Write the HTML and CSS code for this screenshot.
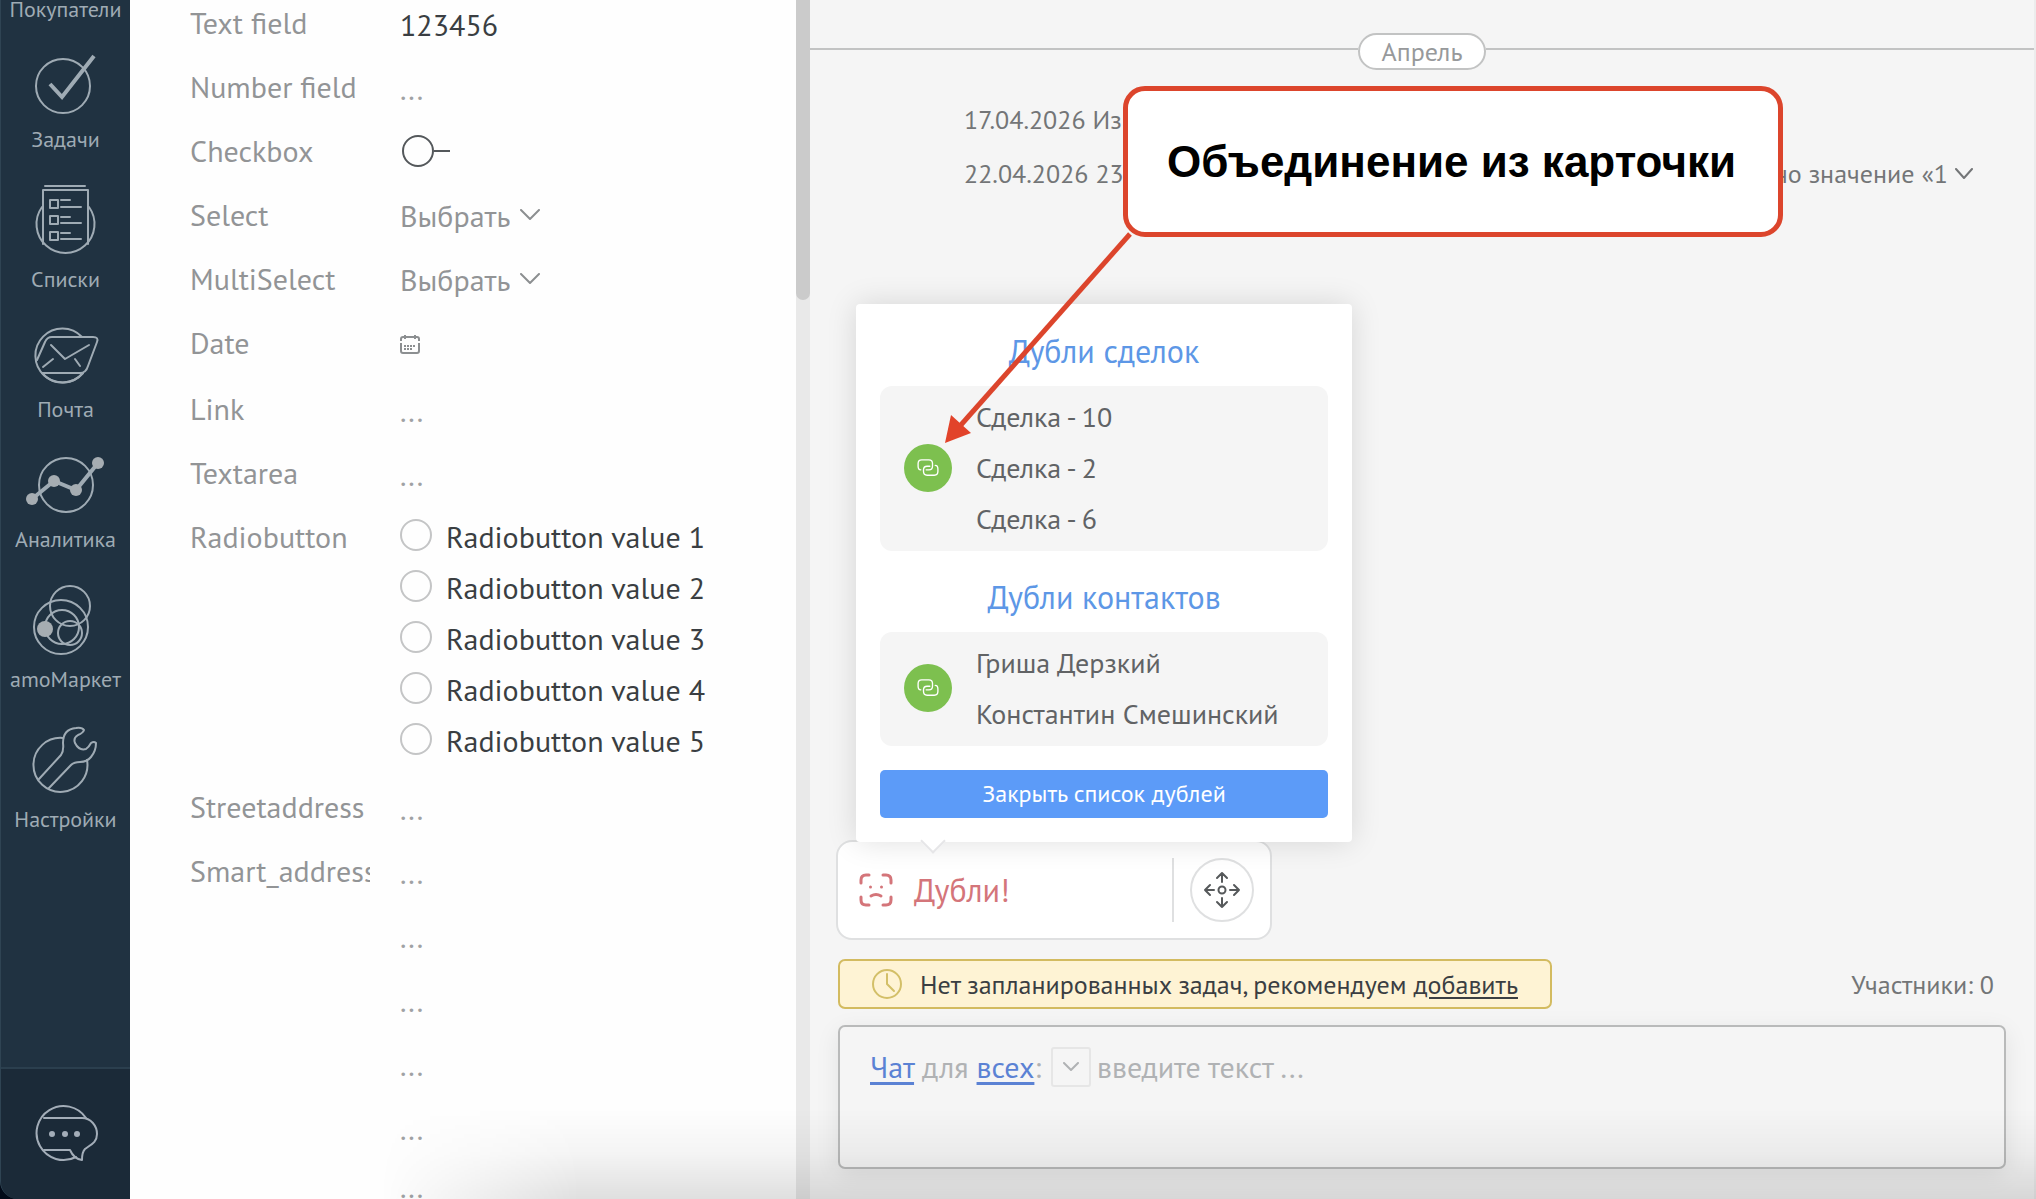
FILE: index.html
```html
<!DOCTYPE html>
<html lang="ru">
<head>
<meta charset="utf-8">
<meta name="viewport" content="width=device-width, initial-scale=1">
<title>Сделка</title>
<link rel="stylesheet" href="styles.css">
</head>
<body>
<div class="app">
  <div class="sidebar-frame">
    <nav class="sidebar">
      <div class="menu">
        <a class="menu-item" href="#"><span>Покупатели</span></a>
        <a class="menu-item" href="#">
          <svg class="menu-icon" viewBox="0 23 130 106" aria-hidden="true"><circle cx="63" cy="86" r="27"/><path class="thick" d="M50 84l12 13 32-41"/></svg>
          <span>Задачи</span>
        </a>
        <a class="menu-item menu-item-tall" href="#">
          <svg class="menu-icon" viewBox="0 153 130 116" aria-hidden="true"><path d="M45 186h40M43 244V190h45v54M42 207a29 29 0 1 0 47 0"/><path d="M50 200h8v8h-8zM50 216h8v8h-8zM50 232h8v8h-8zM61 200h9M61 207h20M61 217h9M61 223h20M61 233h9M61 239h20"/></svg>
          <span>Списки</span>
        </a>
        <a class="menu-item" href="#">
          <svg class="menu-icon" viewBox="0 293 130 106" aria-hidden="true"><path d="M82 337A27 27 0 1 0 83 373"/><path d="M37 360l8-18q2-5 7-5h41q6 0 4 5l-9 24q-2 7-8 7H42M51 345l14 14 24-14M43 367l10-8M75 359l5 7M83 373a27 27 0 0 1-41 0"/></svg>
          <span>Почта</span>
        </a>
        <a class="menu-item" href="#">
          <svg class="menu-icon" viewBox="0 423 130 106" aria-hidden="true"><circle cx="66" cy="485" r="27"/><path class="thick" d="M32 499l22-18 22 9 22-27"/><g class="solid"><circle cx="32" cy="499" r="6"/><circle cx="54" cy="481" r="6"/><circle cx="76" cy="490" r="6"/><circle cx="98" cy="463" r="6"/></g></svg>
          <span>Аналитика</span>
        </a>
        <a class="menu-item menu-item-tall" href="#">
          <svg class="menu-icon" viewBox="0 553 130 116" aria-hidden="true"><circle cx="61" cy="627" r="27"/><circle cx="70" cy="606" r="20"/><circle cx="62" cy="627" r="17"/><circle cx="70" cy="633" r="12"/><circle class="solid" cx="45" cy="629" r="8"/></svg>
          <span>amoМаркет</span>
        </a>
        <a class="menu-item menu-item-tall" href="#">
          <svg class="menu-icon" viewBox="0 693 130 116" aria-hidden="true"><path d="M63 738a27 27 0 1 0 24 22"/><path d="M39 779l22-24q3-4 2-12 0-14 13-15 6-1 8 2-1 3-6 5-5 3-3 8 4 8 11 6 3-2 5-6 3-2 5 0 0 8-5 14-4 5-11 5-6 0-9 3l-22 23"/></svg>
          <span>Настройки</span>
        </a>
      </div>
      <button class="chat-button" type="button" aria-label="Чаты">
        <svg class="chat-icon" viewBox="0 0 64 60" aria-hidden="true"><path d="M52 14A27 27 0 1 0 42 53"/><path d="M10 14h38c9 0 15 8 15 16 0 9-7 11-12 15q-3 3-3 11-8-1-12-10H10"/><g class="solid"><circle cx="18" cy="30" r="3"/><circle cx="31" cy="30" r="3"/><circle cx="43" cy="30" r="3"/></g></svg>
      </button>
    </nav>
  </div>

  <section class="card">
    <form class="fields">
      <div class="field"><label for="f-text">Text field</label><input class="text-value" id="f-text" type="text" value="123456"></div>
      <div class="field"><label for="f-number">Number field</label><input class="text-value" id="f-number" type="text" placeholder="..."></div>
      <div class="field"><label for="f-check">Checkbox</label><input class="switch" id="f-check" type="checkbox"></div>
      <div class="field"><label for="f-select">Select</label><div class="select-wrap"><select id="f-select"><option>Выбрать</option></select><svg class="chevron" viewBox="0 0 20 12" aria-hidden="true"><path d="M1 1l9 9 9-9"/></svg></div></div>
      <div class="field"><label for="f-multi">MultiSelect</label><div class="select-wrap"><select id="f-multi"><option>Выбрать</option></select><svg class="chevron" viewBox="0 0 20 12" aria-hidden="true"><path d="M1 1l9 9 9-9"/></svg></div></div>
      <div class="field"><label for="f-date">Date</label><button class="date-button" id="f-date" type="button" aria-label="Date"><svg viewBox="0 0 20 20" aria-hidden="true"><path d="M1 7V5q0-2 2-2h14q2 0 2 2v2M1 9v8q0 2 2 2h14q2 0 2-2V9M5 1v4M15 1v4"/><path stroke-dasharray="2 1" d="M4 12h12M4 15h9"/></svg></button></div>
      <div class="field"><label for="f-link">Link</label><input class="text-value" id="f-link" type="text" placeholder="..."></div>
      <div class="field"><label for="f-area">Textarea</label><input class="text-value" id="f-area" type="text" placeholder="..."></div>
      <div class="field" role="radiogroup" aria-labelledby="radio-label">
        <span class="field-label" id="radio-label">Radiobutton</span>
        <div class="radios">
          <label class="radio"><input type="radio" name="rb">Radiobutton value 1</label>
          <label class="radio"><input type="radio" name="rb">Radiobutton value 2</label>
          <label class="radio"><input type="radio" name="rb">Radiobutton value 3</label>
          <label class="radio"><input type="radio" name="rb">Radiobutton value 4</label>
          <label class="radio"><input type="radio" name="rb">Radiobutton value 5</label>
        </div>
      </div>
      <div class="field"><label for="f-street">Streetaddress</label><input class="text-value" id="f-street" type="text" placeholder="..."></div>
      <div class="field"><label for="f-smart">Smart_address</label><input class="text-value" id="f-smart" type="text" placeholder="..."></div>
      <div class="field"><input class="text-value" type="text" placeholder="..." aria-label="Город"></div>
      <div class="field"><input class="text-value" type="text" placeholder="..." aria-label="Регион"></div>
      <div class="field"><input class="text-value" type="text" placeholder="..." aria-label="Индекс"></div>
      <div class="field"><input class="text-value" type="text" placeholder="..." aria-label="Страна"></div>
      <div class="field field-short"><input class="text-value" type="text" placeholder="..." aria-label="Дом"></div>
    </form>
    <div class="scroll-track"><div class="scroll-thumb"></div></div>
  </section>

  <main class="feed">
    <div class="month"><span>Апрель</span></div>
    <div class="events">
      <div class="event"><span>17.04.2026 Из</span></div>
      <div class="event"><span>22.04.2026 23</span><button class="event-more" type="button">но значение «1<svg class="event-chevron" viewBox="0 0 18 12" aria-hidden="true"><path d="M1 1l8 9 8-9"/></svg></button></div>
    </div>

    <div class="dock">
      <div class="widget">
        <svg class="face" viewBox="0 0 34 34" aria-hidden="true"><path d="M2 10V7q0-5 5-5h3M24 2h3q5 0 5 5v3M32 24v3q0 5-5 5h-3M10 32H7q-5 0-5-5v-3M12 23q5-3 10 0"/><circle cx="11.500" cy="14" r="1.500"/><circle cx="22.500" cy="14" r="1.500"/></svg>
        <span class="widget-title">Дубли!</span>
        <button class="move" type="button" aria-label="Переместить"><svg viewBox="0 0 36 36" aria-hidden="true"><circle cx="18" cy="18" r="3.500"/><path d="M18 10V1M13 6l5-5 5 5M18 26v9M13 30l5 5 5-5M10 18H1M6 13l-5 5 5 5M26 18h9M30 13l5 5-5 5"/></svg></button>

        <div class="popover">
          <h2>Дубли сделок</h2>
          <div class="group">
            <button class="merge" type="button" aria-label="Объединить сделки"><svg viewBox="0 0 24 20" aria-hidden="true"><path d="M4 12Q1 12 1 8V5q0-4 4-4h8q4 0 4 4v3q0 4-4 4h-3"/><path d="M20 7q3 0 3 4v3q0 4-4 4h-8q-4 0-4-4v-2q0-4 4-4h3"/></svg></button>
            <ul><li>Сделка - 10</li><li>Сделка - 2</li><li>Сделка - 6</li></ul>
          </div>
          <h2>Дубли контактов</h2>
          <div class="group">
            <button class="merge" type="button" aria-label="Объединить контакты"><svg viewBox="0 0 24 20" aria-hidden="true"><path d="M4 12Q1 12 1 8V5q0-4 4-4h8q4 0 4 4v3q0 4-4 4h-3"/><path d="M20 7q3 0 3 4v3q0 4-4 4h-8q-4 0-4-4v-2q0-4 4-4h3"/></svg></button>
            <ul><li>Гриша Дерзкий</li><li>Константин Смешинский</li></ul>
          </div>
          <button class="close-list" type="button">Закрыть список дублей</button>
        </div>
      </div>

      <div class="task-row">
        <div class="task-hint">
          <svg class="clock" viewBox="0 0 30 30" aria-hidden="true"><circle cx="15" cy="15" r="14"/><path d="M15 5v10l7 7"/></svg>
          <span>Нет запланированных задач, рекомендуем <a href="#">добавить</a></span>
        </div>
        <span class="members">Участники: 0</span>
      </div>

      <div class="composer">
        <span class="recipient"><a href="#">Чат</a> для <a href="#">всех</a>:</span>
        <button class="pick" type="button" aria-label="Выбрать получателя"><svg viewBox="0 0 16 10" aria-hidden="true"><path d="M1 1l7 7 7-7"/></svg></button>
        <textarea placeholder="введите текст ..." aria-label="Сообщение"></textarea>
      </div>
    </div>

    <svg class="arrow" viewBox="0 0 200 220" aria-hidden="true"><path class="shaft" d="M190 4L20 196"/><path class="head" d="M5 213l6-28 20 18z"/></svg>
    <div class="callout">Объединение из карточки</div>
  </main>
  <div class="bottom-shade"></div>
</div>
</body>
</html>
```
FILE: styles.css
```css
* { box-sizing: border-box; }

body {
  margin: 0;
  font-family: "PT Sans", "Noto Sans", sans-serif;
  font-size: 30px;
  color: #3a3e42;
  background: #f5f5f5;
}

button, input, select, textarea {
  font: inherit;
  color: inherit;
  margin: 0;
  padding: 0;
  border: 0;
  background: none;
}

svg { display: block; fill: none; stroke-linecap: round; stroke-linejoin: round; }

.app {
  position: relative;
  display: flex;
  height: 100vh;
  overflow: hidden;
}

/* Main menu */
.sidebar-frame { flex: none; width: 130px; background: #020a18; }

.sidebar {
  display: flex;
  flex-direction: column;
  height: 100%;
  overflow: hidden;
  background: #203241;
  border-left: 1px solid #2f4453;
  border-bottom-left-radius: 18px;
}

.menu { flex: 1; min-height: 0; margin-top: -1px; }

.menu-item {
  display: block;
  padding-bottom: 4px;
  color: #9fabb4;
  font-size: 22px;
  line-height: 20px;
  text-align: center;
  text-decoration: none;
}

.menu-icon { width: 130px; height: 106px; margin-left: -1px; stroke: #9fabb4; stroke-width: 2; }
.menu-item-tall .menu-icon { height: 116px; }
.menu-icon .thick { stroke-width: 4; stroke-linecap: butt; stroke-linejoin: miter; }
.solid { fill: #a6adb2; stroke: none; }

.chat-button {
  flex: none;
  display: flex;
  justify-content: center;
  align-items: center;
  height: 132px;
  background: #1b2a38;
  border-top: 2px solid #2b3f4e;
}
.chat-icon { width: 64px; height: 60px; stroke: #a3adb8; stroke-width: 2; }
.chat-icon .solid { fill: #a3adb8; }

/* Deal card */
.card { flex: none; display: flex; width: 680px; background: #fefefe; }

.fields { flex: 1; min-width: 0; margin-top: -9px; overflow: hidden; }

.field {
  display: grid;
  grid-template-columns: 180px 1fr;
  column-gap: 30px;
  align-items: center;
  min-height: 64px;
  padding-left: 60px;
}
.field > :last-child { grid-column: 2; }

.field > label, .field-label {
  align-self: start;
  overflow: hidden;
  color: #929496;
  line-height: 64px;
  white-space: nowrap;
}

.text-value { width: 100%; height: 64px; padding-top: 2px; outline: none; }
.text-value::placeholder { color: #a0a2a4; opacity: 1; }

.field-short { min-height: 52px; }
.field-short .text-value { height: 52px; }

.switch {
  position: relative;
  appearance: none;
  width: 32px;
  height: 32px;
  margin-left: 2px;
  border: 2px solid #54585b;
  border-radius: 50%;
}
.switch::after {
  content: "";
  position: absolute;
  left: 30px;
  top: 13px;
  width: 16px;
  height: 2px;
  background: #54585b;
}

.select-wrap { display: flex; align-items: center; gap: 10px; color: #929496; }
.select-wrap select { appearance: none; field-sizing: content; height: 48px; }
.chevron { width: 20px; height: 12px; stroke: #8c8f91; stroke-width: 2; }

.date-button { justify-self: start; width: 20px; height: 66px; }
.date-button svg { width: 20px; height: 20px; stroke: #8c8f91; stroke-width: 2; stroke-linecap: butt; }

.radios { padding: 6px 0 9px; }
.radio { display: flex; gap: 14px; line-height: 51px; }
.radio input {
  appearance: none;
  width: 32px;
  height: 32px;
  margin-top: 8px;
  border: 2px solid #c4c5c6;
  border-radius: 50%;
}

.scroll-track { flex: none; width: 14px; background: #e9e9e9; }
.scroll-thumb { height: 25%; background: #cbcbcb; border-radius: 0 0 7px 7px; }

/* Event feed */
.feed {
  position: relative;
  flex: 1;
  min-width: 0;
  display: flex;
  flex-direction: column;
  background: #f5f5f5;
  border-right: 2px solid #ececec;
}

.month {
  display: flex;
  align-items: center;
  margin-top: 33px;
  color: #97999b;
  font-size: 26px;
  line-height: 33px;
}
.month::before, .month::after {
  content: "";
  flex: 1;
  height: 2px;
  margin-bottom: 5px;
  background: #c2c3c3;
}
.month span {
  width: 128px;
  background: #fff;
  border: 2px solid #c2c3c3;
  border-radius: 20px;
  text-align: center;
}

.events { padding: 23px 61px 0 154px; color: #737577; font-size: 26px; line-height: 54px; }
.event { display: flex; justify-content: space-between; white-space: nowrap; }
.event-more { display: flex; align-items: center; gap: 7px; }
.event-chevron { width: 18px; height: 12px; stroke: #737577; stroke-width: 2; }

.dock {
  display: flex;
  flex-direction: column;
  margin-top: auto;
  padding: 0 28px 30px 28px;
}

.widget {
  position: relative;
  display: flex;
  align-items: center;
  width: 436px;
  height: 100px;
  margin: 0 0 19px -2px;
  padding: 0 16px 0 21px;
  background: #fff;
  border: 2px solid #dfe0e1;
  border-radius: 16px;
}
.face { width: 34px; height: 34px; stroke: #d4757a; stroke-width: 3; }
.face circle { fill: #d4757a; stroke: none; }
.widget-title {
  flex: 1;
  margin-right: 16px;
  padding-left: 21px;
  border-right: 2px solid #dfe0e1;
  color: #d4757a;
  font-size: 32px;
  line-height: 64px;
}
.move {
  display: flex;
  justify-content: center;
  align-items: center;
  width: 64px;
  height: 64px;
  border: 2px solid #dfe0e1;
  border-radius: 50%;
}
.move svg { width: 36px; height: 36px; stroke: #56595b; stroke-width: 2; overflow: visible; }

/* Duplicates popover */
.popover {
  position: absolute;
  left: 18px;
  bottom: 96px;
  width: 496px;
  padding: 18px 24px 24px;
  background: #fff;
  border-radius: 4px;
  box-shadow: 0 0 30px rgba(0, 0, 0, 0.13);
}
.popover::after {
  content: "";
  position: absolute;
  left: 68px;
  bottom: -8px;
  width: 16px;
  height: 16px;
  background: #fff;
  border: solid #e6e6e8;
  border-width: 0 2px 2px 0;
  transform: rotate(45deg);
}
.popover h2 {
  margin: 0 0 6px;
  color: #5d97e6;
  font-size: 32px;
  font-weight: 400;
  line-height: 58px;
  text-align: center;
}
.group {
  display: flex;
  align-items: center;
  gap: 24px;
  margin-bottom: 17px;
  padding: 5px 24px 7px;
  background: #f5f5f5;
  border-radius: 12px;
}
.group ul {
  margin: 0;
  padding: 0;
  list-style: none;
  color: #616365;
  font-size: 28px;
  line-height: 51px;
  white-space: nowrap;
}
.merge {
  flex: none;
  display: flex;
  justify-content: center;
  align-items: center;
  width: 48px;
  height: 48px;
  background: #7dc04f;
  border-radius: 50%;
}
.merge svg { width: 22px; height: 18px; stroke: #fff; stroke-width: 1.5; }
.close-list {
  display: block;
  width: 100%;
  height: 48px;
  margin-top: 24px;
  padding-bottom: 2px;
  background: #5c9bf8;
  border-radius: 5px;
  color: #fff;
  font-size: 24px;
}

/* Task hint and message box */
.task-row {
  display: flex;
  justify-content: space-between;
  align-items: center;
  margin-bottom: 16px;
  padding-right: 12px;
  font-size: 26px;
}
.task-hint {
  display: flex;
  align-items: center;
  gap: 18px;
  height: 50px;
  padding: 0 32px;
  background: #fef3d4;
  border: 2px solid #d3bb60;
  border-radius: 7px;
}
.task-hint a { color: inherit; text-underline-offset: 3px; text-decoration-thickness: 2px; }
.clock { width: 30px; height: 30px; stroke: #d3bf68; stroke-width: 2; }
.members { color: #737577; }

.composer {
  display: flex;
  align-items: flex-start;
  height: 144px;
  padding: 20px 30px;
  background: #f5f5f5;
  border: 2px solid #b9baba;
  border-radius: 7px;
  box-shadow: 0 6px 24px rgba(0, 0, 0, 0.08);
  color: #b0b2b4;
  line-height: 40px;
}
.composer a { color: #5b82d4; text-underline-offset: 4px; text-decoration-thickness: 3px; }
.pick {
  display: flex;
  justify-content: center;
  align-items: center;
  width: 40px;
  height: 40px;
  margin: 0 6px 0 10px;
  border: 2px solid #e6e6e6;
  border-radius: 3px;
}
.pick svg { width: 16px; height: 10px; stroke: #b0b2b4; stroke-width: 2; }
.composer textarea { flex: 1; height: 100%; resize: none; outline: none; }
.composer textarea::placeholder { color: #b0b2b4; opacity: 1; }

/* Annotation */
.callout {
  position: absolute;
  left: 313px;
  top: 86px;
  width: 660px;
  padding: 0 39px;
  background: #fff;
  border: 5px solid #dc452c;
  border-radius: 22px;
  color: #000;
  font-family: "Liberation Sans", Arial, sans-serif;
  font-size: 44px;
  font-weight: 700;
  line-height: 141px;
  white-space: nowrap;
}
.arrow { position: absolute; left: 130px; top: 230px; width: 200px; height: 220px; }
.shaft { stroke: #dc452c; stroke-width: 5; stroke-linecap: butt; }
.head { fill: #e2432a; }

.bottom-shade {
  position: absolute;
  left: 380px;
  right: 0;
  bottom: 0;
  height: 90px;
  background: linear-gradient(transparent, rgba(0, 0, 0, 0.04) 50%, rgba(0, 0, 0, 0.12));
  mask-image: linear-gradient(to right, transparent, #000 200px);
  pointer-events: none;
}
```
